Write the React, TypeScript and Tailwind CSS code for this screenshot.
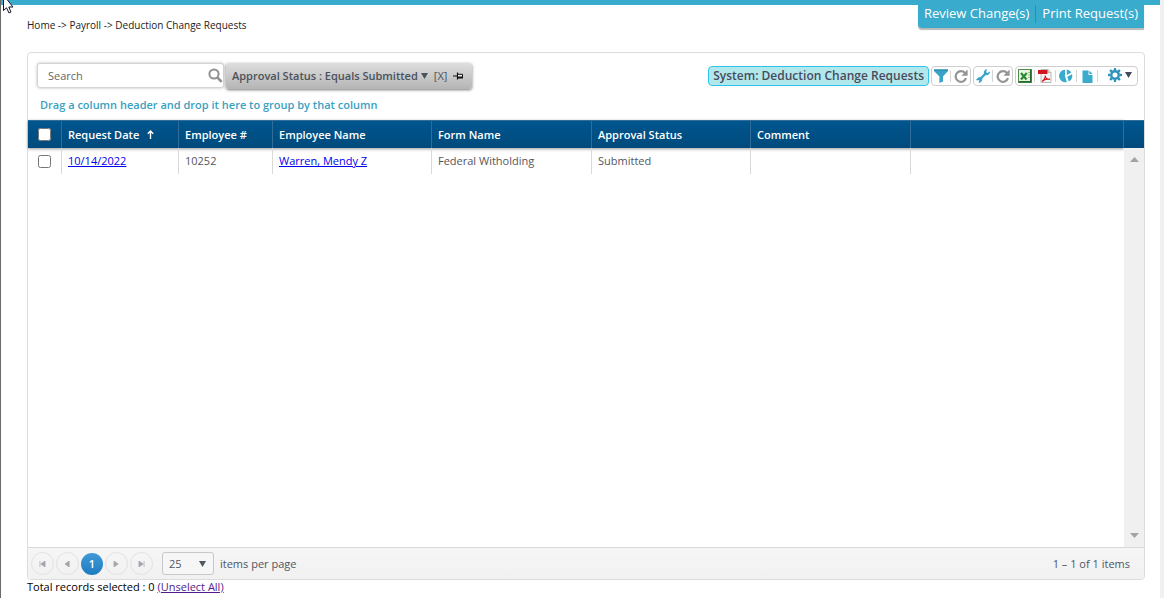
import type { ReactNode } from 'react'

// ─── Data ─────────────────────────────────────────────────────────────────────

interface DeductionRequest {
  date: string
  employeeNo: string
  name: string
  form: string
  status: string
  comment: string
}

const REQUESTS: DeductionRequest[] = [
  { date: '10/14/2022', employeeNo: '10252', name: 'Warren, Mendy Z', form: 'Federal Witholding', status: 'Submitted', comment: '' },
]

const HEADERS = ['Request Date', 'Employee #', 'Employee Name', 'Form Name', 'Approval Status', 'Comment']

// ─── Icons ────────────────────────────────────────────────────────────────────

const SearchIcon = () => (
  <svg width="15" height="15" viewBox="0 0 15 15" fill="none" stroke="#909090">
    <circle cx="6" cy="6" r="4.6" strokeWidth="2" />
    <path d="M9.6 9.6L13.6 13.8" strokeWidth="2.6" />
  </svg>
)

const PinIcon = () => (
  <svg width="11" height="8" viewBox="0 0 11 8" fill="none" stroke="#111">
    <path d="M0 4h4" />
    <path d="M4.5 0.5v7" strokeWidth="1.2" />
    <path d="M5 2.3h4.5v3.2H5" fill="#eee" />
    <path d="M5 5.5h5" strokeWidth="2" />
  </svg>
)

const FilterIcon = () => (
  <svg width="14" height="14" viewBox="0 0 14 14">
    <path d="M0 0.5h14v1.6L9 7.6v5l-3.6 1.4V7.6L0 2.1z" fill="#39a4c8" />
    <path d="M0 0.5h14v1.2H0z" fill="#2b87a6" />
  </svg>
)

const RefreshIcon = () => (
  <svg width="14" height="14" viewBox="0 0 14 14">
    <path d="M11 4A5.3 5.3 0 1 0 12 9.2" fill="none" stroke="#949494" strokeWidth="2.2" />
    <path d="M13.6 0.6v6.2H7.4z" fill="#949494" />
  </svg>
)

const WrenchIcon = () => (
  <svg width="14" height="14" viewBox="0 0 14 14">
    <path
      d="M9.8 0.2L8 2.3 7.8 4.8 4.6 8 2.2 8.4 0.1 10.8 0.7 11.5 2.6 10.9 3.4 11.7 2.6 13.3 3.5 13.9 5.9 11.9 6.3 9.5 9.5 6.3 12.1 6 14 3.7 13.7 2.5 11.7 4 10.4 3.4 10.2 2.1 11.4 0.4z"
      fill="#39a4c8"
    />
  </svg>
)

const ExcelIcon = () => (
  <svg width="14" height="14" viewBox="0 0 14 14">
    <rect x="0.5" y="0.5" width="13" height="13" fill="#e9f4e4" stroke="#4c8f4c" />
    <path d="M10 3.5h2.5M10 6h2.5M10 8.5h2.5" stroke="#8dbb87" />
    <path d="M3 4L8.5 10.5M8.8 4L3 10.5" stroke="#2b8a30" strokeWidth="2.2" />
    <path d="M1 12.7h12M12.7 1v12" stroke="#276b2a" strokeWidth="1.4" />
  </svg>
)

const PdfIcon = () => (
  <svg width="14" height="14" viewBox="0 0 14 14">
    <path d="M3 0.5h7l3 3v10H3z" fill="#f5f5f5" stroke="#b9b9b9" />
    <path d="M10 0.5v3h3" fill="#ddd" stroke="#b9b9b9" />
    <path d="M0 1h9.5v4H0z" fill="#d3161c" />
    <path d="M4 12.5C6 11 7.5 8.5 7.2 6.5C7.5 9 9.5 10.5 12 10.3C9 9.7 6 10.5 4 12.5z" fill="none" stroke="#d3161c" strokeWidth="1.1" />
  </svg>
)

const ChartIcon = () => (
  <svg width="14" height="14" viewBox="0 0 14 14" fill="#39abcd">
    <path d="M6 0.8V7L7.8 13A6.2 6.2 0 1 1 6 0.8z" />
    <path d="M7.8 0.5A6.3 6.3 0 0 1 12.3 3.6L7.8 6z" />
    <path d="M13 5.2A6.3 6.3 0 0 1 9.8 12.4L8.3 7.7z" />
  </svg>
)

const FileIcon = () => (
  <svg width="11" height="13" viewBox="0 0 11 13" fill="#39abcd">
    <path d="M0.5 0.5h6v4.500h4v8h-10z" />
    <path d="M7.3 0.5l3.200 3.600H7.300z" />
  </svg>
)

const GEAR_TEETH = [0, 45, 90, 135, 180, 225, 270, 315]

const GearIcon = () => (
  <svg width="14" height="14" viewBox="0 0 14 14">
    <circle cx="7" cy="7" r="3.7" fill="none" stroke="#2f93bb" strokeWidth="2.4" />
    {GEAR_TEETH.map((a) => (
      <path key={a} d="M5.6 2.5L6 0h2l0.4 2.5z" fill="#2f93bb" transform={`rotate(${a} 7 7)`} />
    ))}
  </svg>
)

const Caret = ({ className }: { className: string }) => (
  <svg width="7" height="6" viewBox="0 0 7 6" className={className}>
    <path d="M0 0h7L3.5 6z" fill="currentColor" />
  </svg>
)

// ─── Toolbar ──────────────────────────────────────────────────────────────────

function IconGroup({ children }: { children: ReactNode }) {
  return (
    <div className="flex h-5 items-center divide-x divide-[#d5d5d5] rounded-[4px] border border-[#cfcfcf] bg-white">
      {children}
    </div>
  )
}

function IconButton({ label, wide, children }: { label: string; wide?: boolean; children: ReactNode }) {
  return (
    <button
      type="button"
      aria-label={label}
      className={wide ? 'flex h-3 w-[21px] items-center justify-center' : 'flex h-3 w-[19px] items-center justify-center'}
    >
      {children}
    </button>
  )
}

function Toolbar() {
  return (
    <div className="h-[67px] pt-2.5 pr-1.5 pl-[9px]">
      <div className="flex justify-between">
        <div className="flex gap-0.5">
          <div className="flex h-[25px] w-[187px] items-center rounded-[3px] border border-[#d4d4d4] bg-white pl-2.5 shadow-[0_0_3px_#bbbbbb]">
            <input
              type="search"
              aria-label="Search"
              placeholder="Search"
              className="w-full min-w-0 flex-1 text-[11px] outline-none placeholder:text-[#666666]"
            />
            <button type="button" aria-label="Run search">
              <SearchIcon />
            </button>
          </div>
          <div className="flex h-[26px] items-center rounded-[3px] bg-linear-to-b from-[#dedede] to-[#b5b5b5] pr-2 pl-1.5 text-[#4a525c] shadow-[0_1px_3px_#777777]">
            <button type="button" className="flex items-center gap-[3px] font-semibold">
              Approval Status : Equals Submitted
              <Caret className="text-[#4a525c]" />
            </button>
            <button type="button" className="ml-1.5" aria-label="Remove filter">[X]</button>
            <button type="button" className="ml-1.5" aria-label="Pin filter">
              <PinIcon />
            </button>
          </div>
        </div>
        <div className="flex items-start gap-0.5 pt-[3px]">
          <button
            type="button"
            className="h-5 rounded-[4px] border border-[#2fc4ee] bg-[#b0e8ec] px-1 text-[12px] leading-[18px] font-semibold text-[#4a4a5c]"
          >
            System: Deduction Change Requests
          </button>
          <IconGroup>
            <IconButton label="Filter"><FilterIcon /></IconButton>
            <IconButton label="Reset filter"><RefreshIcon /></IconButton>
          </IconGroup>
          <IconGroup>
            <IconButton label="Layout settings"><WrenchIcon /></IconButton>
            <IconButton label="Reset layout"><RefreshIcon /></IconButton>
          </IconGroup>
          <IconGroup>
            <IconButton label="Export to Excel"><ExcelIcon /></IconButton>
            <IconButton label="Export to PDF" wide><PdfIcon /></IconButton>
            <IconButton label="Chart" wide><ChartIcon /></IconButton>
            <IconButton label="New document" wide><FileIcon /></IconButton>
            <button type="button" aria-label="Options" className="flex h-4 items-start gap-[3px] pr-[5px] pl-2.5">
              <GearIcon />
              <Caret className="mt-1 text-[#444a5a]" />
            </button>
          </IconGroup>
        </div>
      </div>
      <p className="mt-2 px-[3px] leading-4 font-semibold text-[#3a9fc1]">
        Drag a column header and drop it here to group by that column
      </p>
    </div>
  )
}

// ─── Grid ─────────────────────────────────────────────────────────────────────

const ScrollArrow = ({ down }: { down?: boolean }) => (
  <svg width="9" height="5" viewBox="0 0 9 5">
    <path d={down ? 'M0 0h9L4.5 5z' : 'M0 5h9L4.5 0z'} fill="#a3a3a3" />
  </svg>
)

function Grid() {
  return (
    <div className="flex flex-1">
      <div className="min-w-0 flex-1">
        <table className="w-full table-fixed border-separate border-spacing-0 text-left">
          <colgroup>
            <col className="w-[34px]" />
            <col className="w-[117px]" />
            <col className="w-[94px]" />
            <col className="w-[159px]" />
            <col className="w-[160px]" />
            <col className="w-[159px]" />
            <col className="w-[160px]" />
            <col />
          </colgroup>
          <thead className="shadow-[0_1px_3px_#999999]">
            <tr className="h-7 bg-linear-to-b from-[#00568f] to-[#004a7c] text-white">
              <th className="border-t border-r border-[#316d99] p-0">
                <input type="checkbox" aria-label="Select all" className="mx-auto block size-[13px]" />
              </th>
              {HEADERS.map((h, i) => (
                <th key={h} className="border-t border-r border-[#316d99] px-1.5 py-0 font-semibold">
                  <span className="flex items-center gap-2">
                    {h}
                    {i === 0 && (
                      <svg width="7" height="9" viewBox="0 0 7 9" fill="none" stroke="white">
                        <path d="M3.5 9V1M0.8 3.8L3.5 1L6.2 3.8" strokeWidth="1.4" />
                      </svg>
                    )}
                  </span>
                </th>
              ))}
              <th className="border-t border-r border-[#316d99]" />
            </tr>
          </thead>
          <tbody>
            {REQUESTS.map((r) => (
              <tr key={r.date + r.employeeNo} className="h-[26px] text-[#55555c]">
                <td className="border-r border-[#d9d9d9] p-0">
                  <input type="checkbox" aria-label={`Select ${r.name}`} className="mx-auto block size-[13px]" />
                </td>
                <td className="border-r border-[#d9d9d9] px-1.5 py-0">
                  <a href="#request" className="text-[#0000ee] underline">{r.date}</a>
                </td>
                <td className="border-r border-[#d9d9d9] px-1.5 py-0">{r.employeeNo}</td>
                <td className="border-r border-[#d9d9d9] px-1.5 py-0">
                  <a href="#employee" className="text-[#0000ee] underline">{r.name}</a>
                </td>
                <td className="border-r border-[#d9d9d9] px-1.5 py-0">{r.form}</td>
                <td className="border-r border-[#d9d9d9] px-1.5 py-0">{r.status}</td>
                <td className="border-r border-[#d9d9d9] px-1.5 py-0">{r.comment}</td>
                <td />
              </tr>
            ))}
          </tbody>
        </table>
      </div>
      <div className="flex w-5 flex-col">
        <div className="h-7 border-t border-[#316d99] bg-linear-to-b from-[#00568f] to-[#004a7c]" />
        <div className="flex flex-1 flex-col items-center justify-between bg-[#f0f0f0] py-[9px]">
          <ScrollArrow />
          <ScrollArrow down />
        </div>
      </div>
    </div>
  )
}

// ─── Pager ────────────────────────────────────────────────────────────────────

const PAGER_ARROWS = {
  first: { label: 'First page', d: 'M1 0v7M7 0v7L2 3.5z' },
  prev: { label: 'Previous page', d: 'M6 0v7L1 3.5z' },
  next: { label: 'Next page', d: 'M1 0v7L6 3.5z' },
  last: { label: 'Last page', d: 'M7 0v7M1 0v7L6 3.5z' },
}

function PagerButton({ to }: { to: keyof typeof PAGER_ARROWS }) {
  const { label, d } = PAGER_ARROWS[to]
  return (
    <button
      type="button"
      aria-label={label}
      className="flex size-[23px] items-center justify-center rounded-full border border-[#e2e2e2]"
    >
      <svg width="7" height="6" viewBox="0 0 8 7">
        <path d={d} fill="#a2a5ab" stroke="#a2a5ab" strokeWidth="0.8" />
      </svg>
    </button>
  )
}

function Pager() {
  return (
    <div className="flex h-8 items-center rounded-b-[4px] border-t border-[#d9d9d9] bg-linear-to-b from-[#f6f6f6] to-[#f1f1f1] pr-3.5 pl-[3px] text-[#4f5562]">
      <div className="flex items-center gap-0.5">
        <PagerButton to="first" />
        <PagerButton to="prev" />
        <button
          type="button"
          aria-current="page"
          className="size-[22px] rounded-full bg-linear-to-b from-[#3f9ad8] to-[#1c7cc0] font-semibold text-white"
        >
          1
        </button>
        <PagerButton to="next" />
        <PagerButton to="last" />
      </div>
      <label className="ml-[9px] flex items-center gap-1.5">
        <span className="grid items-center">
          <select
            defaultValue="25"
            className="col-start-1 row-start-1 h-[23px] w-[52px] appearance-none rounded-[3px] border border-[#c8c8c8] bg-[#f6f6f6] pl-1.5"
          >
            <option>10</option>
            <option>25</option>
            <option>50</option>
          </select>
          <Caret className="pointer-events-none col-start-1 row-start-1 mr-2 justify-self-end" />
        </span>
        items per page
      </label>
      <span className="ml-auto">1 – 1 of 1 items</span>
    </div>
  )
}

// ─── Page ─────────────────────────────────────────────────────────────────────

export default function App() {
  return (
    <div className="flex min-h-screen border-l border-[#6b6b6b] bg-white font-['Open_Sans','Noto_Sans',sans-serif] text-[11px] leading-4">
      <svg width="12" height="14" viewBox="0 0 12 14" className="absolute top-0 left-[3px]">
        <path d="M0.5 -5V10.5L3.5 7.8L6 13L8 12L5.8 7H10z" fill="white" stroke="#111122" />
      </svg>
      <div className="flex min-w-0 flex-1 flex-col">
        <div className="h-[5px] bg-[#39abcd]" />
        <div className="flex flex-1 flex-col pr-[15px] pb-[5px] pl-[26px]">
          <header className="flex items-start justify-between pr-px pb-[18px]">
            <nav aria-label="Breadcrumb" className="pt-3 pb-px text-[10px] leading-4 text-[#222222]">
              <a href="#home">Home</a> -&gt; <a href="#payroll">Payroll</a> -&gt; Deduction Change Requests
            </nav>
            <div className="flex h-[23px] items-start divide-x divide-[#2e8dab] rounded-bl-[4px] bg-[#39abcd] text-[13px] leading-[17px] text-white shadow-[0_2px_1px_#b8b8b8]">
              <button type="button" className="px-1.5 pb-px">Review Change(s)</button>
              <button type="button" className="px-1.5 pb-px">Print Request(s)</button>
            </div>
          </header>
          <main className="flex flex-1 flex-col rounded-[4px] border border-[#dcdcdc]">
            <Toolbar />
            <Grid />
            <Pager />
          </main>
          <footer className="leading-[13px] text-black">
            Total records selected : 0 <a href="#unselect" className="text-[#551a8b] underline">(Unselect All)</a>
          </footer>
        </div>
      </div>
      <div className="w-1 bg-[#f0f0f0]" />
    </div>
  )
}
